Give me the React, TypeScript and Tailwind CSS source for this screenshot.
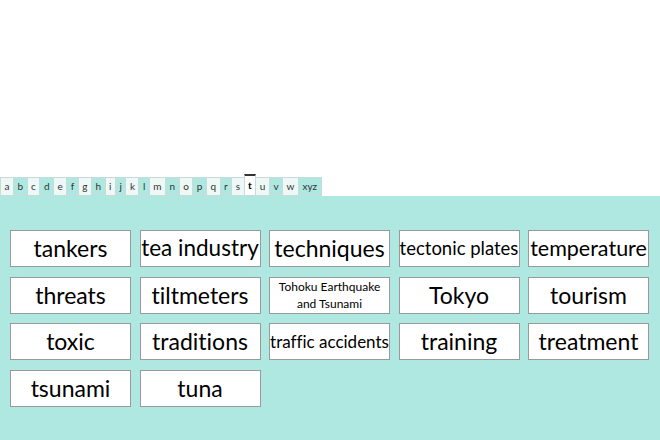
import React from "react";

const letters = ["a","b","c","d","e","f","g","h","i","j","k","l","m","n","o","p","q","r","s","t","u","v","w","xyz"];

type Item = { label: React.ReactNode; size: string };

const items: Item[] = [
  { label: "tankers", size: "text-[23px]" },
  { label: "tea industry", size: "text-[22.5px]" },
  { label: "techniques", size: "text-[23px]" },
  { label: "tectonic plates", size: "text-[18.5px]" },
  { label: "temperature", size: "text-[21.5px]" },
  { label: "threats", size: "text-[23px]" },
  { label: "tiltmeters", size: "text-[23px]" },
  { label: <span className="block leading-[17px]">Tohoku Earthquake<br />and Tsunami</span>, size: "text-[12px]" },
  { label: "Tokyo", size: "text-[23px]" },
  { label: "tourism", size: "text-[23px]" },
  { label: "toxic", size: "text-[23px]" },
  { label: "traditions", size: "text-[23px]" },
  { label: "traffic accidents", size: "text-[17px]" },
  { label: "training", size: "text-[23px]" },
  { label: "treatment", size: "text-[23px]" },
  { label: "tsunami", size: "text-[23px]" },
  { label: "tuna", size: "text-[23px]" },
];

export default function App() {
  return (
    <div className="w-[660px] h-[440px] bg-white flex flex-col overflow-hidden [font-variant-ligatures:none]" style={{ fontFamily: "Lato, 'Open Sans', sans-serif" }}>
      <div className="h-[174px]" />
      <div className="flex items-end h-[22px]">
        {letters.map((l, i) => {
          const sel = l === "t";
          const teal = i % 2 === 1;
          return (
            <div
              key={l}
              className={
                "h-[19px] flex items-center justify-center px-[3.5px] text-[10px] text-[#333] border border-[#c7dcd8] -ml-px first:ml-0 " +
                (sel
                  ? "bg-white font-bold text-black border-t-2 border-t-[#333] h-[22px] relative z-10"
                  : teal
                  ? "bg-[#aee8e0]"
                  : "bg-[#eef9f7]")
              }
            >
              {l}
            </div>
          );
        })}
      </div>
      <div className="flex-1 bg-[#aee8e0] pt-[34px] pl-[10px]">
        <div className="grid grid-cols-[repeat(5,121px)] gap-x-[8.5px] gap-y-[9.5px]">
          {items.map((it, i) => (
            <div
              key={i}
              className={"h-[37px] bg-white border border-[#9a9a9a] flex items-center justify-center text-center text-black whitespace-nowrap leading-none " + it.size}
            >
              {it.label}
            </div>
          ))}
        </div>
      </div>
    </div>
  );
}
